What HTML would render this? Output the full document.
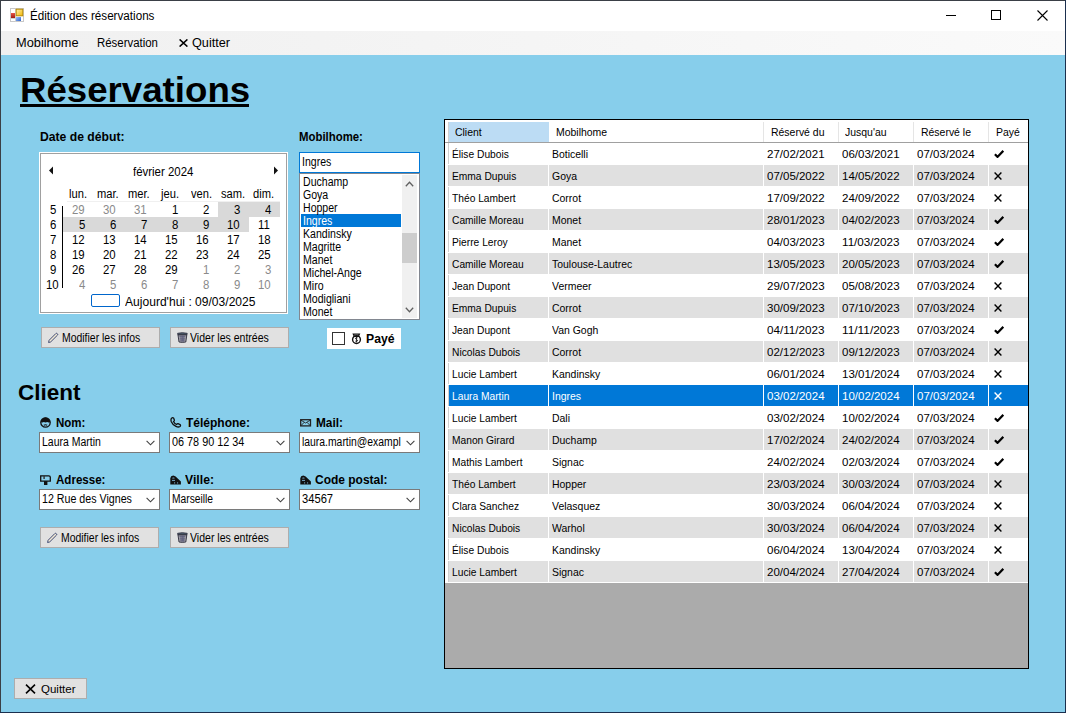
<!DOCTYPE html>
<html><head><meta charset="utf-8"><title>Édition des réservations</title>
<style>
html,body{margin:0;padding:0;}
body{width:1066px;height:713px;position:relative;overflow:hidden;background:#87CEEB;font-family:"Liberation Sans", sans-serif;}
span{position:absolute;white-space:pre;line-height:1;}
</style></head><body>
<div style="position:absolute;left:0px;top:0px;width:1066px;height:31px;background:#fff;z-index:1"></div>
<div style="position:absolute;left:0px;top:31px;width:1066px;height:24px;background:linear-gradient(to right,#F0F0F0,#FAFAFA);z-index:1"></div>
<div style="position:absolute;left:0px;top:0px;width:1066px;height:1px;background:#3A3F46;z-index:50"></div>
<div style="position:absolute;left:0px;top:0px;width:1px;height:713px;background:#3A3F46;z-index:50"></div>
<div style="position:absolute;left:1065px;top:0px;width:1px;height:713px;background:#1B2F4E;z-index:50"></div>
<div style="position:absolute;left:0px;top:712px;width:1066px;height:1px;background:#1B2F4E;z-index:50"></div>
<svg style="position:absolute;left:10px;top:8px;z-index:3" width="14" height="14" viewBox="0 0 14 14">
<defs><linearGradient id="gy" x1="0" y1="0" x2="1" y2="1"><stop offset="0" stop-color="#FFF1B0"/><stop offset="1" stop-color="#F2B600"/></linearGradient>
<linearGradient id="gb" x1="0" y1="0" x2="1" y2="1"><stop offset="0" stop-color="#9CC0FF"/><stop offset="1" stop-color="#2F63C8"/></linearGradient>
<linearGradient id="gr" x1="0" y1="0" x2="0" y2="1"><stop offset="0" stop-color="#E8554A"/><stop offset="1" stop-color="#9E1A10"/></linearGradient></defs>
<rect x="0.5" y="0.5" width="13" height="13" fill="#fff" stroke="#C8C8C8"/>
<line x1="5.5" y1="0" x2="5.5" y2="14" stroke="#D0D0D0"/>
<line x1="0" y1="10.5" x2="5" y2="10.5" stroke="#D0D0D0"/>
<rect x="6.2" y="1.2" width="6.6" height="6.6" fill="url(#gy)" stroke="#B88A00" stroke-width="1"/>
<rect x="1" y="5" width="4" height="5" fill="url(#gr)"/>
<rect x="6" y="9" width="5" height="4" fill="url(#gb)"/>
</svg>
<div style="position:absolute;left:946px;top:15px;width:10px;height:1px;background:#000;z-index:3"></div>
<div style="position:absolute;left:991px;top:10px;width:10px;height:10px;border:1px solid #000;box-sizing:border-box;z-index:3"></div>
<svg style="position:absolute;left:1037px;top:10px;z-index:3" width="11" height="11" viewBox="0 0 11 11">
<path d="M0.5 0.5 L10.5 10.5 M10.5 0.5 L0.5 10.5" stroke="#000" stroke-width="1.1"/></svg>
<svg style="position:absolute;left:179px;top:39px;z-index:3" width="9" height="8" viewBox="0 0 9 8">
<path d="M0.6 0.4 L8.4 7.6 M8.4 0.4 L0.6 7.6" stroke="#000" stroke-width="1.5"/></svg>
<div style="position:absolute;left:20px;top:104px;width:229px;height:3px;background:#000;z-index:3"></div>
<div style="position:absolute;left:39px;top:152px;width:249px;height:162px;background:#fff;z-index:1"></div>
<div style="position:absolute;left:40px;top:153px;width:247px;height:160px;border:1px solid #A0A0A0;box-sizing:border-box;z-index:2"></div>
<svg style="position:absolute;left:48px;top:166px;z-index:3" width="6" height="9" viewBox="0 0 6 9"><path d="M5 0.5 L1 4.5 L5 8.5 Z" fill="#111"/></svg>
<svg style="position:absolute;left:273px;top:166px;z-index:3" width="6" height="9" viewBox="0 0 6 9"><path d="M1 0.5 L5 4.5 L1 8.5 Z" fill="#111"/></svg>
<div style="position:absolute;left:67px;top:201px;width:213px;height:1px;background:#F0F0F0;z-index:2"></div>
<div style="position:absolute;left:62px;top:206px;width:1px;height:82px;background:#000;z-index:2"></div>
<div style="position:absolute;left:218px;top:202px;width:62px;height:15px;background:#D9D9D9;z-index:1"></div>
<div style="position:absolute;left:63px;top:217px;width:186px;height:15px;background:#D9D9D9;z-index:1"></div>
<div style="position:absolute;left:91px;top:294px;width:29px;height:13px;border:1px solid #0066CC;border-radius:2px;box-sizing:border-box;z-index:2"></div>
<div style="position:absolute;left:299px;top:152px;width:121px;height:21px;background:#fff;border:1px solid #0078D7;box-sizing:border-box;z-index:2"></div>
<div style="position:absolute;left:299px;top:173px;width:121px;height:147px;background:#fff;border:1px solid #828790;box-sizing:border-box;z-index:1"></div>
<div style="position:absolute;left:402px;top:175px;width:15px;height:143px;background:#F0F0F0;z-index:2"></div>
<div style="position:absolute;left:402px;top:233px;width:15px;height:30px;background:#CDCDCD;z-index:3"></div>
<svg style="position:absolute;left:404.5px;top:181px;z-index:3" width="9" height="6" viewBox="0 0 9 6"><path d="M0.8 5.2 L4.5 1.3 L8.2 5.2" fill="none" stroke="#606060" stroke-width="1.3"/></svg>
<svg style="position:absolute;left:404.5px;top:307px;z-index:3" width="9" height="6" viewBox="0 0 9 6"><path d="M0.8 0.8 L4.5 4.7 L8.2 0.8" fill="none" stroke="#606060" stroke-width="1.3"/></svg>
<div style="position:absolute;left:301px;top:214px;width:100px;height:13px;background:#0078D7;z-index:2"></div>
<div style="position:absolute;left:41px;top:327px;width:119px;height:21px;background:#E1E1E1;border:1px solid #ADADAD;box-sizing:border-box;z-index:1"></div>
<svg style="position:absolute;left:47px;top:332px;z-index:3" width="12" height="12" viewBox="0 0 12 12">
<path d="M1.6 10.5 L2.1 8.3 L8.9 1.5 Q9.6 1 10.2 1.6 L10.5 1.9 Q11 2.5 10.5 3.1 L3.7 9.9 Z" fill="#F4EBD6" stroke="#34406e" stroke-width="0.95" stroke-linejoin="round"/>
</svg>
<div style="position:absolute;left:170px;top:327px;width:119px;height:21px;background:#E1E1E1;border:1px solid #ADADAD;box-sizing:border-box;z-index:1"></div>
<svg style="position:absolute;left:177px;top:332px;z-index:3" width="11" height="11" viewBox="0 0 11 11">
<path d="M0.6 1.3 Q5.3 0 10.2 1.3 L10 2.8 L0.8 2.8 Z" fill="#4a5a6a" stroke="#2d2d3d" stroke-width="0.8"/>
<path d="M1 2.9 L2 10 Q5.4 10.8 8.8 10 L9.8 2.9 Z" fill="#A8A6AC" stroke="#2a2a3a" stroke-width="0.9"/>
<path d="M2.4 4.4 L8.4 4.4 M2.6 6.2 L8.2 6.2 M2.8 8 L8 8 M3.9 3.4 L4.2 9.8 M5.4 3.4 L5.4 9.8 M6.9 3.4 L6.6 9.8" stroke="#5a5a7a" stroke-width="0.8"/></svg>
<div style="position:absolute;left:327px;top:328px;width:74px;height:21px;background:#fff;z-index:1"></div>
<div style="position:absolute;left:332px;top:332px;width:13px;height:13px;border:1px solid #333;box-sizing:border-box;background:#fff;z-index:2"></div>
<svg style="position:absolute;left:351px;top:333px;z-index:3" width="12" height="12" viewBox="0 0 12 12">
<path d="M2.3 1.1 L8.4 1.1 L7.4 3.4 L3.3 3.4 Z" fill="none" stroke="#111" stroke-width="1.2"/>
<circle cx="5.5" cy="6.6" r="3.9" fill="none" stroke="#111" stroke-width="1.4"/>
<path d="M6.6 4.9 Q5.3 4.2 4.6 5 Q4.1 5.9 5.5 6.5 Q6.9 7.1 6.4 8 Q5.7 8.9 4.3 8.1 M5.5 3.8 L5.5 9.4" fill="none" stroke="#222" stroke-width="0.9"/></svg>
<svg style="position:absolute;left:40px;top:417px;z-index:3" width="12" height="12" viewBox="0 0 12 12">
<circle cx="5.5" cy="5.5" r="4.7" fill="none" stroke="#111" stroke-width="1.3"/>
<path d="M0.8 5.3 A4.7 4.7 0 0 1 10.2 5.3 L8.6 5.6 L7.2 4.9 L5.5 5.5 L3.8 4.9 L2.4 5.6 Z" fill="#111"/>
<path d="M3.8 8.2 Q5.5 7.2 7.2 8.2" fill="none" stroke="#111" stroke-width="1.1"/></svg>
<svg style="position:absolute;left:169.5px;top:417px;z-index:3" width="12" height="11" viewBox="0 0 12 11">
<path d="M1.6 1.2 Q2.6 0.3 3.6 1 L4.4 3.2 Q4.4 4 3.5 4.5 Q4.6 6.8 6.6 7.5 Q7.2 6.6 8 6.7 L10.2 7.6 Q10.9 8.6 10 9.4 Q8.4 10.6 6 9.4 Q2.6 7.8 1.2 4.4 Q0.6 2.4 1.6 1.2 Z" fill="none" stroke="#111" stroke-width="1.3" stroke-linejoin="round"/></svg>
<svg style="position:absolute;left:299.5px;top:418.5px;z-index:3" width="12" height="8" viewBox="0 0 12 8">
<rect x="0.7" y="0.7" width="9.8" height="6.2" fill="none" stroke="#222" stroke-width="1.3"/><path d="M1 1.2 L5.6 4 L10.2 1.2 M1 6.6 L4.2 3.3 M10.2 6.6 L7 3.3" fill="none" stroke="#222" stroke-width="0.9"/></svg>
<div style="position:absolute;left:39px;top:432px;width:121px;height:21px;background:#fff;border:1px solid #7A7A7A;box-sizing:border-box;z-index:1"></div>
<svg style="position:absolute;left:146px;top:440px;z-index:3" width="9" height="6" viewBox="0 0 9 6"><path d="M0.6 0.8 L4.5 4.8 L8.4 0.8" fill="none" stroke="#404040" stroke-width="1.1"/></svg>
<div style="position:absolute;left:169px;top:432px;width:121px;height:21px;background:#fff;border:1px solid #7A7A7A;box-sizing:border-box;z-index:1"></div>
<svg style="position:absolute;left:276px;top:440px;z-index:3" width="9" height="6" viewBox="0 0 9 6"><path d="M0.6 0.8 L4.5 4.8 L8.4 0.8" fill="none" stroke="#404040" stroke-width="1.1"/></svg>
<div style="position:absolute;left:299px;top:432px;width:121px;height:21px;background:#fff;border:1px solid #7A7A7A;box-sizing:border-box;z-index:1"></div>
<svg style="position:absolute;left:406px;top:440px;z-index:3" width="9" height="6" viewBox="0 0 9 6"><path d="M0.6 0.8 L4.5 4.8 L8.4 0.8" fill="none" stroke="#404040" stroke-width="1.1"/></svg>
<svg style="position:absolute;left:40px;top:474.5px;z-index:3" width="12" height="11" viewBox="0 0 12 11">
<path d="M0.7 0.8 L8.8 0.8 Q10.3 0.8 10.3 2.3 L10.3 6.1 L0.7 6.1 Z" fill="none" stroke="#111" stroke-width="1.3"/><rect x="3.4" y="1" width="1.4" height="3" fill="#333"/><rect x="4" y="6.1" width="3.4" height="3.9" fill="#111"/></svg>
<svg style="position:absolute;left:170px;top:475.2px;z-index:3" width="12" height="10" viewBox="0 0 12 10">
<path d="M0.3 9.4 L0.3 3.2 Q0.6 0.6 3.3 0.4 Q4.6 0.6 5.6 1.6 L10.9 6.4 L10.9 9.4 Z" fill="#111"/>
<ellipse cx="3.4" cy="3" rx="1.3" ry="0.55" fill="#7fb6d9"/><rect x="2" y="4.9" width="3" height="0.9" fill="#7fb6d9"/><rect x="4.2" y="7.3" width="0.9" height="1.2" fill="#7fb6d9"/><rect x="7.2" y="7.3" width="0.9" height="1.2" fill="#7fb6d9"/></svg>
<svg style="position:absolute;left:300.3px;top:475.2px;z-index:3" width="12" height="10" viewBox="0 0 12 10">
<path d="M0.3 9.4 L0.3 3.2 Q0.6 0.6 3.3 0.4 Q4.6 0.6 5.6 1.6 L10.9 6.4 L10.9 9.4 Z" fill="#111"/>
<ellipse cx="3.4" cy="3" rx="1.3" ry="0.55" fill="#7fb6d9"/><rect x="2" y="4.9" width="3" height="0.9" fill="#7fb6d9"/><rect x="4.2" y="7.3" width="0.9" height="1.2" fill="#7fb6d9"/><rect x="7.2" y="7.3" width="0.9" height="1.2" fill="#7fb6d9"/></svg>
<div style="position:absolute;left:39px;top:489px;width:121px;height:21px;background:#fff;border:1px solid #7A7A7A;box-sizing:border-box;z-index:1"></div>
<svg style="position:absolute;left:146px;top:497px;z-index:3" width="9" height="6" viewBox="0 0 9 6"><path d="M0.6 0.8 L4.5 4.8 L8.4 0.8" fill="none" stroke="#404040" stroke-width="1.1"/></svg>
<div style="position:absolute;left:169px;top:489px;width:121px;height:21px;background:#fff;border:1px solid #7A7A7A;box-sizing:border-box;z-index:1"></div>
<svg style="position:absolute;left:276px;top:497px;z-index:3" width="9" height="6" viewBox="0 0 9 6"><path d="M0.6 0.8 L4.5 4.8 L8.4 0.8" fill="none" stroke="#404040" stroke-width="1.1"/></svg>
<div style="position:absolute;left:299px;top:489px;width:121px;height:21px;background:#fff;border:1px solid #7A7A7A;box-sizing:border-box;z-index:1"></div>
<svg style="position:absolute;left:406px;top:497px;z-index:3" width="9" height="6" viewBox="0 0 9 6"><path d="M0.6 0.8 L4.5 4.8 L8.4 0.8" fill="none" stroke="#404040" stroke-width="1.1"/></svg>
<div style="position:absolute;left:40px;top:527px;width:119px;height:21px;background:#E1E1E1;border:1px solid #ADADAD;box-sizing:border-box;z-index:1"></div>
<svg style="position:absolute;left:46px;top:532px;z-index:3" width="12" height="12" viewBox="0 0 12 12">
<path d="M1.6 10.5 L2.1 8.3 L8.9 1.5 Q9.6 1 10.2 1.6 L10.5 1.9 Q11 2.5 10.5 3.1 L3.7 9.9 Z" fill="#F4EBD6" stroke="#34406e" stroke-width="0.95" stroke-linejoin="round"/>
</svg>
<div style="position:absolute;left:170px;top:527px;width:119px;height:21px;background:#E1E1E1;border:1px solid #ADADAD;box-sizing:border-box;z-index:1"></div>
<svg style="position:absolute;left:177px;top:532px;z-index:3" width="11" height="11" viewBox="0 0 11 11">
<path d="M0.6 1.3 Q5.3 0 10.2 1.3 L10 2.8 L0.8 2.8 Z" fill="#4a5a6a" stroke="#2d2d3d" stroke-width="0.8"/>
<path d="M1 2.9 L2 10 Q5.4 10.8 8.8 10 L9.8 2.9 Z" fill="#A8A6AC" stroke="#2a2a3a" stroke-width="0.9"/>
<path d="M2.4 4.4 L8.4 4.4 M2.6 6.2 L8.2 6.2 M2.8 8 L8 8 M3.9 3.4 L4.2 9.8 M5.4 3.4 L5.4 9.8 M6.9 3.4 L6.6 9.8" stroke="#5a5a7a" stroke-width="0.8"/></svg>
<div style="position:absolute;left:14px;top:678px;width:73px;height:21px;background:#E1E1E1;border:1px solid #ADADAD;box-sizing:border-box;z-index:1"></div>
<svg style="position:absolute;left:25px;top:684px;z-index:3" width="11" height="10" viewBox="0 0 11 10">
<path d="M1 0.7 L10 9.3 M10 0.7 L1 9.3" stroke="#000" stroke-width="1.6"/></svg>
<div style="position:absolute;left:444px;top:119px;width:585px;height:550px;background:#ABABAB;border:1px solid #000;box-sizing:border-box;z-index:1"></div>
<div style="position:absolute;left:445px;top:120px;width:583px;height:23px;background:#fff;z-index:1"></div>
<div style="position:absolute;left:449px;top:122px;width:100px;height:20px;background:#BCDCF4;z-index:2"></div>
<div style="position:absolute;left:448px;top:122px;width:1px;height:20px;background:#D0D0D0;z-index:2"></div>
<div style="position:absolute;left:445px;top:142px;width:583px;height:1px;background:#A0A0A0;z-index:2"></div>
<div style="position:absolute;left:763px;top:122px;width:1px;height:20px;background:#E5E5E5;z-index:2"></div>
<div style="position:absolute;left:838px;top:122px;width:1px;height:20px;background:#E5E5E5;z-index:2"></div>
<div style="position:absolute;left:913px;top:122px;width:1px;height:20px;background:#E5E5E5;z-index:2"></div>
<div style="position:absolute;left:988px;top:122px;width:1px;height:20px;background:#E5E5E5;z-index:2"></div>
<div style="position:absolute;left:445px;top:143px;width:583px;height:22px;background:#fff;z-index:1"></div>
<div style="position:absolute;left:446px;top:143px;width:2px;height:21px;background:#fff;z-index:2"></div>
<div style="position:absolute;left:448px;top:143px;width:1px;height:21px;background:#D0D0D0;z-index:2"></div>
<div style="position:absolute;left:449px;top:143px;width:99px;height:21px;background:#fff;z-index:2"></div>
<div style="position:absolute;left:549px;top:143px;width:214px;height:21px;background:#fff;z-index:2"></div>
<div style="position:absolute;left:764px;top:143px;width:74px;height:21px;background:#fff;z-index:2"></div>
<div style="position:absolute;left:839px;top:143px;width:74px;height:21px;background:#fff;z-index:2"></div>
<div style="position:absolute;left:914px;top:143px;width:74px;height:21px;background:#fff;z-index:2"></div>
<div style="position:absolute;left:989px;top:143px;width:39px;height:21px;background:#fff;z-index:2"></div>
<svg style="position:absolute;left:994px;top:150px;z-index:5" width="10" height="8" viewBox="0 0 10 8"><path d="M0.9 4.3 L3.5 6.9 L9.3 0.8" fill="none" stroke="#000" stroke-width="2.2"/></svg>
<div style="position:absolute;left:445px;top:165px;width:583px;height:22px;background:#fff;z-index:1"></div>
<div style="position:absolute;left:446px;top:165px;width:2px;height:21px;background:#fff;z-index:2"></div>
<div style="position:absolute;left:448px;top:165px;width:1px;height:21px;background:#D0D0D0;z-index:2"></div>
<div style="position:absolute;left:449px;top:165px;width:99px;height:21px;background:#E0E0E0;z-index:2"></div>
<div style="position:absolute;left:549px;top:165px;width:214px;height:21px;background:#E0E0E0;z-index:2"></div>
<div style="position:absolute;left:764px;top:165px;width:74px;height:21px;background:#E0E0E0;z-index:2"></div>
<div style="position:absolute;left:839px;top:165px;width:74px;height:21px;background:#E0E0E0;z-index:2"></div>
<div style="position:absolute;left:914px;top:165px;width:74px;height:21px;background:#E0E0E0;z-index:2"></div>
<div style="position:absolute;left:989px;top:165px;width:39px;height:21px;background:#E0E0E0;z-index:2"></div>
<svg style="position:absolute;left:994px;top:172px;z-index:5" width="8" height="8" viewBox="0 0 8 8"><path d="M0.6 0.6 L7.4 7.4 M7.4 0.6 L0.6 7.4" stroke="#000" stroke-width="1.4"/></svg>
<div style="position:absolute;left:445px;top:187px;width:583px;height:22px;background:#fff;z-index:1"></div>
<div style="position:absolute;left:446px;top:187px;width:2px;height:21px;background:#fff;z-index:2"></div>
<div style="position:absolute;left:448px;top:187px;width:1px;height:21px;background:#D0D0D0;z-index:2"></div>
<div style="position:absolute;left:449px;top:187px;width:99px;height:21px;background:#fff;z-index:2"></div>
<div style="position:absolute;left:549px;top:187px;width:214px;height:21px;background:#fff;z-index:2"></div>
<div style="position:absolute;left:764px;top:187px;width:74px;height:21px;background:#fff;z-index:2"></div>
<div style="position:absolute;left:839px;top:187px;width:74px;height:21px;background:#fff;z-index:2"></div>
<div style="position:absolute;left:914px;top:187px;width:74px;height:21px;background:#fff;z-index:2"></div>
<div style="position:absolute;left:989px;top:187px;width:39px;height:21px;background:#fff;z-index:2"></div>
<svg style="position:absolute;left:994px;top:194px;z-index:5" width="8" height="8" viewBox="0 0 8 8"><path d="M0.6 0.6 L7.4 7.4 M7.4 0.6 L0.6 7.4" stroke="#000" stroke-width="1.4"/></svg>
<div style="position:absolute;left:445px;top:209px;width:583px;height:22px;background:#fff;z-index:1"></div>
<div style="position:absolute;left:446px;top:209px;width:2px;height:21px;background:#fff;z-index:2"></div>
<div style="position:absolute;left:448px;top:209px;width:1px;height:21px;background:#D0D0D0;z-index:2"></div>
<div style="position:absolute;left:449px;top:209px;width:99px;height:21px;background:#E0E0E0;z-index:2"></div>
<div style="position:absolute;left:549px;top:209px;width:214px;height:21px;background:#E0E0E0;z-index:2"></div>
<div style="position:absolute;left:764px;top:209px;width:74px;height:21px;background:#E0E0E0;z-index:2"></div>
<div style="position:absolute;left:839px;top:209px;width:74px;height:21px;background:#E0E0E0;z-index:2"></div>
<div style="position:absolute;left:914px;top:209px;width:74px;height:21px;background:#E0E0E0;z-index:2"></div>
<div style="position:absolute;left:989px;top:209px;width:39px;height:21px;background:#E0E0E0;z-index:2"></div>
<svg style="position:absolute;left:994px;top:216px;z-index:5" width="10" height="8" viewBox="0 0 10 8"><path d="M0.9 4.3 L3.5 6.9 L9.3 0.8" fill="none" stroke="#000" stroke-width="2.2"/></svg>
<div style="position:absolute;left:445px;top:231px;width:583px;height:22px;background:#fff;z-index:1"></div>
<div style="position:absolute;left:446px;top:231px;width:2px;height:21px;background:#fff;z-index:2"></div>
<div style="position:absolute;left:448px;top:231px;width:1px;height:21px;background:#D0D0D0;z-index:2"></div>
<div style="position:absolute;left:449px;top:231px;width:99px;height:21px;background:#fff;z-index:2"></div>
<div style="position:absolute;left:549px;top:231px;width:214px;height:21px;background:#fff;z-index:2"></div>
<div style="position:absolute;left:764px;top:231px;width:74px;height:21px;background:#fff;z-index:2"></div>
<div style="position:absolute;left:839px;top:231px;width:74px;height:21px;background:#fff;z-index:2"></div>
<div style="position:absolute;left:914px;top:231px;width:74px;height:21px;background:#fff;z-index:2"></div>
<div style="position:absolute;left:989px;top:231px;width:39px;height:21px;background:#fff;z-index:2"></div>
<svg style="position:absolute;left:994px;top:238px;z-index:5" width="10" height="8" viewBox="0 0 10 8"><path d="M0.9 4.3 L3.5 6.9 L9.3 0.8" fill="none" stroke="#000" stroke-width="2.2"/></svg>
<div style="position:absolute;left:445px;top:253px;width:583px;height:22px;background:#fff;z-index:1"></div>
<div style="position:absolute;left:446px;top:253px;width:2px;height:21px;background:#fff;z-index:2"></div>
<div style="position:absolute;left:448px;top:253px;width:1px;height:21px;background:#D0D0D0;z-index:2"></div>
<div style="position:absolute;left:449px;top:253px;width:99px;height:21px;background:#E0E0E0;z-index:2"></div>
<div style="position:absolute;left:549px;top:253px;width:214px;height:21px;background:#E0E0E0;z-index:2"></div>
<div style="position:absolute;left:764px;top:253px;width:74px;height:21px;background:#E0E0E0;z-index:2"></div>
<div style="position:absolute;left:839px;top:253px;width:74px;height:21px;background:#E0E0E0;z-index:2"></div>
<div style="position:absolute;left:914px;top:253px;width:74px;height:21px;background:#E0E0E0;z-index:2"></div>
<div style="position:absolute;left:989px;top:253px;width:39px;height:21px;background:#E0E0E0;z-index:2"></div>
<svg style="position:absolute;left:994px;top:260px;z-index:5" width="10" height="8" viewBox="0 0 10 8"><path d="M0.9 4.3 L3.5 6.9 L9.3 0.8" fill="none" stroke="#000" stroke-width="2.2"/></svg>
<div style="position:absolute;left:445px;top:275px;width:583px;height:22px;background:#fff;z-index:1"></div>
<div style="position:absolute;left:446px;top:275px;width:2px;height:21px;background:#fff;z-index:2"></div>
<div style="position:absolute;left:448px;top:275px;width:1px;height:21px;background:#D0D0D0;z-index:2"></div>
<div style="position:absolute;left:449px;top:275px;width:99px;height:21px;background:#fff;z-index:2"></div>
<div style="position:absolute;left:549px;top:275px;width:214px;height:21px;background:#fff;z-index:2"></div>
<div style="position:absolute;left:764px;top:275px;width:74px;height:21px;background:#fff;z-index:2"></div>
<div style="position:absolute;left:839px;top:275px;width:74px;height:21px;background:#fff;z-index:2"></div>
<div style="position:absolute;left:914px;top:275px;width:74px;height:21px;background:#fff;z-index:2"></div>
<div style="position:absolute;left:989px;top:275px;width:39px;height:21px;background:#fff;z-index:2"></div>
<svg style="position:absolute;left:994px;top:282px;z-index:5" width="8" height="8" viewBox="0 0 8 8"><path d="M0.6 0.6 L7.4 7.4 M7.4 0.6 L0.6 7.4" stroke="#000" stroke-width="1.4"/></svg>
<div style="position:absolute;left:445px;top:297px;width:583px;height:22px;background:#fff;z-index:1"></div>
<div style="position:absolute;left:446px;top:297px;width:2px;height:21px;background:#fff;z-index:2"></div>
<div style="position:absolute;left:448px;top:297px;width:1px;height:21px;background:#D0D0D0;z-index:2"></div>
<div style="position:absolute;left:449px;top:297px;width:99px;height:21px;background:#E0E0E0;z-index:2"></div>
<div style="position:absolute;left:549px;top:297px;width:214px;height:21px;background:#E0E0E0;z-index:2"></div>
<div style="position:absolute;left:764px;top:297px;width:74px;height:21px;background:#E0E0E0;z-index:2"></div>
<div style="position:absolute;left:839px;top:297px;width:74px;height:21px;background:#E0E0E0;z-index:2"></div>
<div style="position:absolute;left:914px;top:297px;width:74px;height:21px;background:#E0E0E0;z-index:2"></div>
<div style="position:absolute;left:989px;top:297px;width:39px;height:21px;background:#E0E0E0;z-index:2"></div>
<svg style="position:absolute;left:994px;top:304px;z-index:5" width="8" height="8" viewBox="0 0 8 8"><path d="M0.6 0.6 L7.4 7.4 M7.4 0.6 L0.6 7.4" stroke="#000" stroke-width="1.4"/></svg>
<div style="position:absolute;left:445px;top:319px;width:583px;height:22px;background:#fff;z-index:1"></div>
<div style="position:absolute;left:446px;top:319px;width:2px;height:21px;background:#fff;z-index:2"></div>
<div style="position:absolute;left:448px;top:319px;width:1px;height:21px;background:#D0D0D0;z-index:2"></div>
<div style="position:absolute;left:449px;top:319px;width:99px;height:21px;background:#fff;z-index:2"></div>
<div style="position:absolute;left:549px;top:319px;width:214px;height:21px;background:#fff;z-index:2"></div>
<div style="position:absolute;left:764px;top:319px;width:74px;height:21px;background:#fff;z-index:2"></div>
<div style="position:absolute;left:839px;top:319px;width:74px;height:21px;background:#fff;z-index:2"></div>
<div style="position:absolute;left:914px;top:319px;width:74px;height:21px;background:#fff;z-index:2"></div>
<div style="position:absolute;left:989px;top:319px;width:39px;height:21px;background:#fff;z-index:2"></div>
<svg style="position:absolute;left:994px;top:326px;z-index:5" width="10" height="8" viewBox="0 0 10 8"><path d="M0.9 4.3 L3.5 6.9 L9.3 0.8" fill="none" stroke="#000" stroke-width="2.2"/></svg>
<div style="position:absolute;left:445px;top:341px;width:583px;height:22px;background:#fff;z-index:1"></div>
<div style="position:absolute;left:446px;top:341px;width:2px;height:21px;background:#fff;z-index:2"></div>
<div style="position:absolute;left:448px;top:341px;width:1px;height:21px;background:#D0D0D0;z-index:2"></div>
<div style="position:absolute;left:449px;top:341px;width:99px;height:21px;background:#E0E0E0;z-index:2"></div>
<div style="position:absolute;left:549px;top:341px;width:214px;height:21px;background:#E0E0E0;z-index:2"></div>
<div style="position:absolute;left:764px;top:341px;width:74px;height:21px;background:#E0E0E0;z-index:2"></div>
<div style="position:absolute;left:839px;top:341px;width:74px;height:21px;background:#E0E0E0;z-index:2"></div>
<div style="position:absolute;left:914px;top:341px;width:74px;height:21px;background:#E0E0E0;z-index:2"></div>
<div style="position:absolute;left:989px;top:341px;width:39px;height:21px;background:#E0E0E0;z-index:2"></div>
<svg style="position:absolute;left:994px;top:348px;z-index:5" width="8" height="8" viewBox="0 0 8 8"><path d="M0.6 0.6 L7.4 7.4 M7.4 0.6 L0.6 7.4" stroke="#000" stroke-width="1.4"/></svg>
<div style="position:absolute;left:445px;top:363px;width:583px;height:22px;background:#fff;z-index:1"></div>
<div style="position:absolute;left:446px;top:363px;width:2px;height:21px;background:#fff;z-index:2"></div>
<div style="position:absolute;left:448px;top:363px;width:1px;height:21px;background:#D0D0D0;z-index:2"></div>
<div style="position:absolute;left:449px;top:363px;width:99px;height:21px;background:#fff;z-index:2"></div>
<div style="position:absolute;left:549px;top:363px;width:214px;height:21px;background:#fff;z-index:2"></div>
<div style="position:absolute;left:764px;top:363px;width:74px;height:21px;background:#fff;z-index:2"></div>
<div style="position:absolute;left:839px;top:363px;width:74px;height:21px;background:#fff;z-index:2"></div>
<div style="position:absolute;left:914px;top:363px;width:74px;height:21px;background:#fff;z-index:2"></div>
<div style="position:absolute;left:989px;top:363px;width:39px;height:21px;background:#fff;z-index:2"></div>
<svg style="position:absolute;left:994px;top:370px;z-index:5" width="8" height="8" viewBox="0 0 8 8"><path d="M0.6 0.6 L7.4 7.4 M7.4 0.6 L0.6 7.4" stroke="#000" stroke-width="1.4"/></svg>
<div style="position:absolute;left:445px;top:385px;width:583px;height:22px;background:#fff;z-index:1"></div>
<div style="position:absolute;left:446px;top:385px;width:2px;height:21px;background:#fff;z-index:2"></div>
<div style="position:absolute;left:448px;top:385px;width:1px;height:21px;background:#D0D0D0;z-index:2"></div>
<div style="position:absolute;left:449px;top:385px;width:99px;height:21px;background:#0078D7;z-index:2"></div>
<div style="position:absolute;left:549px;top:385px;width:214px;height:21px;background:#0078D7;z-index:2"></div>
<div style="position:absolute;left:764px;top:385px;width:74px;height:21px;background:#0078D7;z-index:2"></div>
<div style="position:absolute;left:839px;top:385px;width:74px;height:21px;background:#0078D7;z-index:2"></div>
<div style="position:absolute;left:914px;top:385px;width:74px;height:21px;background:#0078D7;z-index:2"></div>
<div style="position:absolute;left:989px;top:385px;width:39px;height:21px;background:#0078D7;z-index:2"></div>
<svg style="position:absolute;left:994px;top:392px;z-index:5" width="8" height="8" viewBox="0 0 8 8"><path d="M0.6 0.6 L7.4 7.4 M7.4 0.6 L0.6 7.4" stroke="#fff" stroke-width="1.4"/></svg>
<div style="position:absolute;left:445px;top:407px;width:583px;height:22px;background:#fff;z-index:1"></div>
<div style="position:absolute;left:446px;top:407px;width:2px;height:21px;background:#fff;z-index:2"></div>
<div style="position:absolute;left:448px;top:407px;width:1px;height:21px;background:#D0D0D0;z-index:2"></div>
<div style="position:absolute;left:449px;top:407px;width:99px;height:21px;background:#fff;z-index:2"></div>
<div style="position:absolute;left:549px;top:407px;width:214px;height:21px;background:#fff;z-index:2"></div>
<div style="position:absolute;left:764px;top:407px;width:74px;height:21px;background:#fff;z-index:2"></div>
<div style="position:absolute;left:839px;top:407px;width:74px;height:21px;background:#fff;z-index:2"></div>
<div style="position:absolute;left:914px;top:407px;width:74px;height:21px;background:#fff;z-index:2"></div>
<div style="position:absolute;left:989px;top:407px;width:39px;height:21px;background:#fff;z-index:2"></div>
<svg style="position:absolute;left:994px;top:414px;z-index:5" width="10" height="8" viewBox="0 0 10 8"><path d="M0.9 4.3 L3.5 6.9 L9.3 0.8" fill="none" stroke="#000" stroke-width="2.2"/></svg>
<div style="position:absolute;left:445px;top:429px;width:583px;height:22px;background:#fff;z-index:1"></div>
<div style="position:absolute;left:446px;top:429px;width:2px;height:21px;background:#fff;z-index:2"></div>
<div style="position:absolute;left:448px;top:429px;width:1px;height:21px;background:#D0D0D0;z-index:2"></div>
<div style="position:absolute;left:449px;top:429px;width:99px;height:21px;background:#E0E0E0;z-index:2"></div>
<div style="position:absolute;left:549px;top:429px;width:214px;height:21px;background:#E0E0E0;z-index:2"></div>
<div style="position:absolute;left:764px;top:429px;width:74px;height:21px;background:#E0E0E0;z-index:2"></div>
<div style="position:absolute;left:839px;top:429px;width:74px;height:21px;background:#E0E0E0;z-index:2"></div>
<div style="position:absolute;left:914px;top:429px;width:74px;height:21px;background:#E0E0E0;z-index:2"></div>
<div style="position:absolute;left:989px;top:429px;width:39px;height:21px;background:#E0E0E0;z-index:2"></div>
<svg style="position:absolute;left:994px;top:436px;z-index:5" width="10" height="8" viewBox="0 0 10 8"><path d="M0.9 4.3 L3.5 6.9 L9.3 0.8" fill="none" stroke="#000" stroke-width="2.2"/></svg>
<div style="position:absolute;left:445px;top:451px;width:583px;height:22px;background:#fff;z-index:1"></div>
<div style="position:absolute;left:446px;top:451px;width:2px;height:21px;background:#fff;z-index:2"></div>
<div style="position:absolute;left:448px;top:451px;width:1px;height:21px;background:#D0D0D0;z-index:2"></div>
<div style="position:absolute;left:449px;top:451px;width:99px;height:21px;background:#fff;z-index:2"></div>
<div style="position:absolute;left:549px;top:451px;width:214px;height:21px;background:#fff;z-index:2"></div>
<div style="position:absolute;left:764px;top:451px;width:74px;height:21px;background:#fff;z-index:2"></div>
<div style="position:absolute;left:839px;top:451px;width:74px;height:21px;background:#fff;z-index:2"></div>
<div style="position:absolute;left:914px;top:451px;width:74px;height:21px;background:#fff;z-index:2"></div>
<div style="position:absolute;left:989px;top:451px;width:39px;height:21px;background:#fff;z-index:2"></div>
<svg style="position:absolute;left:994px;top:458px;z-index:5" width="10" height="8" viewBox="0 0 10 8"><path d="M0.9 4.3 L3.5 6.9 L9.3 0.8" fill="none" stroke="#000" stroke-width="2.2"/></svg>
<div style="position:absolute;left:445px;top:473px;width:583px;height:22px;background:#fff;z-index:1"></div>
<div style="position:absolute;left:446px;top:473px;width:2px;height:21px;background:#fff;z-index:2"></div>
<div style="position:absolute;left:448px;top:473px;width:1px;height:21px;background:#D0D0D0;z-index:2"></div>
<div style="position:absolute;left:449px;top:473px;width:99px;height:21px;background:#E0E0E0;z-index:2"></div>
<div style="position:absolute;left:549px;top:473px;width:214px;height:21px;background:#E0E0E0;z-index:2"></div>
<div style="position:absolute;left:764px;top:473px;width:74px;height:21px;background:#E0E0E0;z-index:2"></div>
<div style="position:absolute;left:839px;top:473px;width:74px;height:21px;background:#E0E0E0;z-index:2"></div>
<div style="position:absolute;left:914px;top:473px;width:74px;height:21px;background:#E0E0E0;z-index:2"></div>
<div style="position:absolute;left:989px;top:473px;width:39px;height:21px;background:#E0E0E0;z-index:2"></div>
<svg style="position:absolute;left:994px;top:480px;z-index:5" width="8" height="8" viewBox="0 0 8 8"><path d="M0.6 0.6 L7.4 7.4 M7.4 0.6 L0.6 7.4" stroke="#000" stroke-width="1.4"/></svg>
<div style="position:absolute;left:445px;top:495px;width:583px;height:22px;background:#fff;z-index:1"></div>
<div style="position:absolute;left:446px;top:495px;width:2px;height:21px;background:#fff;z-index:2"></div>
<div style="position:absolute;left:448px;top:495px;width:1px;height:21px;background:#D0D0D0;z-index:2"></div>
<div style="position:absolute;left:449px;top:495px;width:99px;height:21px;background:#fff;z-index:2"></div>
<div style="position:absolute;left:549px;top:495px;width:214px;height:21px;background:#fff;z-index:2"></div>
<div style="position:absolute;left:764px;top:495px;width:74px;height:21px;background:#fff;z-index:2"></div>
<div style="position:absolute;left:839px;top:495px;width:74px;height:21px;background:#fff;z-index:2"></div>
<div style="position:absolute;left:914px;top:495px;width:74px;height:21px;background:#fff;z-index:2"></div>
<div style="position:absolute;left:989px;top:495px;width:39px;height:21px;background:#fff;z-index:2"></div>
<svg style="position:absolute;left:994px;top:502px;z-index:5" width="8" height="8" viewBox="0 0 8 8"><path d="M0.6 0.6 L7.4 7.4 M7.4 0.6 L0.6 7.4" stroke="#000" stroke-width="1.4"/></svg>
<div style="position:absolute;left:445px;top:517px;width:583px;height:22px;background:#fff;z-index:1"></div>
<div style="position:absolute;left:446px;top:517px;width:2px;height:21px;background:#fff;z-index:2"></div>
<div style="position:absolute;left:448px;top:517px;width:1px;height:21px;background:#D0D0D0;z-index:2"></div>
<div style="position:absolute;left:449px;top:517px;width:99px;height:21px;background:#E0E0E0;z-index:2"></div>
<div style="position:absolute;left:549px;top:517px;width:214px;height:21px;background:#E0E0E0;z-index:2"></div>
<div style="position:absolute;left:764px;top:517px;width:74px;height:21px;background:#E0E0E0;z-index:2"></div>
<div style="position:absolute;left:839px;top:517px;width:74px;height:21px;background:#E0E0E0;z-index:2"></div>
<div style="position:absolute;left:914px;top:517px;width:74px;height:21px;background:#E0E0E0;z-index:2"></div>
<div style="position:absolute;left:989px;top:517px;width:39px;height:21px;background:#E0E0E0;z-index:2"></div>
<svg style="position:absolute;left:994px;top:524px;z-index:5" width="8" height="8" viewBox="0 0 8 8"><path d="M0.6 0.6 L7.4 7.4 M7.4 0.6 L0.6 7.4" stroke="#000" stroke-width="1.4"/></svg>
<div style="position:absolute;left:445px;top:539px;width:583px;height:22px;background:#fff;z-index:1"></div>
<div style="position:absolute;left:446px;top:539px;width:2px;height:21px;background:#fff;z-index:2"></div>
<div style="position:absolute;left:448px;top:539px;width:1px;height:21px;background:#D0D0D0;z-index:2"></div>
<div style="position:absolute;left:449px;top:539px;width:99px;height:21px;background:#fff;z-index:2"></div>
<div style="position:absolute;left:549px;top:539px;width:214px;height:21px;background:#fff;z-index:2"></div>
<div style="position:absolute;left:764px;top:539px;width:74px;height:21px;background:#fff;z-index:2"></div>
<div style="position:absolute;left:839px;top:539px;width:74px;height:21px;background:#fff;z-index:2"></div>
<div style="position:absolute;left:914px;top:539px;width:74px;height:21px;background:#fff;z-index:2"></div>
<div style="position:absolute;left:989px;top:539px;width:39px;height:21px;background:#fff;z-index:2"></div>
<svg style="position:absolute;left:994px;top:546px;z-index:5" width="8" height="8" viewBox="0 0 8 8"><path d="M0.6 0.6 L7.4 7.4 M7.4 0.6 L0.6 7.4" stroke="#000" stroke-width="1.4"/></svg>
<div style="position:absolute;left:445px;top:561px;width:583px;height:22px;background:#fff;z-index:1"></div>
<div style="position:absolute;left:446px;top:561px;width:2px;height:21px;background:#fff;z-index:2"></div>
<div style="position:absolute;left:448px;top:561px;width:1px;height:21px;background:#D0D0D0;z-index:2"></div>
<div style="position:absolute;left:449px;top:561px;width:99px;height:21px;background:#E0E0E0;z-index:2"></div>
<div style="position:absolute;left:549px;top:561px;width:214px;height:21px;background:#E0E0E0;z-index:2"></div>
<div style="position:absolute;left:764px;top:561px;width:74px;height:21px;background:#E0E0E0;z-index:2"></div>
<div style="position:absolute;left:839px;top:561px;width:74px;height:21px;background:#E0E0E0;z-index:2"></div>
<div style="position:absolute;left:914px;top:561px;width:74px;height:21px;background:#E0E0E0;z-index:2"></div>
<div style="position:absolute;left:989px;top:561px;width:39px;height:21px;background:#E0E0E0;z-index:2"></div>
<svg style="position:absolute;left:994px;top:568px;z-index:5" width="10" height="8" viewBox="0 0 10 8"><path d="M0.9 4.3 L3.5 6.9 L9.3 0.8" fill="none" stroke="#000" stroke-width="2.2"/></svg>
<div style="position:absolute;left:445px;top:582px;width:583px;height:1px;background:#fff;z-index:3"></div>
<span style="left:30.00px;top:10.00px;font-size:12px;color:#000;transform:scaleX(0.9717);transform-origin:0 0;z-index:2">Édition des réservations</span>
<span style="left:16.00px;top:37.00px;font-size:12px;color:#000;transform:scaleX(1.0664);transform-origin:0 0;z-index:2">Mobilhome</span>
<span style="left:97.00px;top:37.00px;font-size:12px;color:#000;transform:scaleX(0.9515);transform-origin:0 0;z-index:2">Réservation</span>
<span style="left:191.50px;top:37.00px;font-size:12px;color:#000;transform:scaleX(1.0575);transform-origin:0 0;z-index:2">Quitter</span>
<span style="left:20.00px;top:72.00px;font-size:35px;font-weight:bold;color:#000;transform:scaleX(1.0469);transform-origin:0 0;z-index:2">Réservations</span>
<span style="left:40.00px;top:131.00px;font-size:12px;font-weight:bold;color:#000;transform:scaleX(1.0141);transform-origin:0 0;z-index:2">Date de début:</span>
<span style="left:132.50px;top:166.00px;font-size:12px;color:#000;transform:scaleX(0.9535);transform-origin:0 0;z-index:2">février 2024</span>
<span style="left:68.98px;top:188.00px;font-size:12px;color:#000;transform:scaleX(0.9300);transform-origin:0 0;z-index:2">lun.</span>
<span style="left:97.19px;top:188.00px;font-size:12px;color:#000;transform:scaleX(0.9300);transform-origin:0 0;z-index:2">mar.</span>
<span style="left:128.19px;top:188.00px;font-size:12px;color:#000;transform:scaleX(0.9300);transform-origin:0 0;z-index:2">mer.</span>
<span style="left:161.37px;top:188.00px;font-size:12px;color:#000;transform:scaleX(0.9300);transform-origin:0 0;z-index:2">jeu.</span>
<span style="left:191.17px;top:188.00px;font-size:12px;color:#000;transform:scaleX(0.9300);transform-origin:0 0;z-index:2">ven.</span>
<span style="left:220.91px;top:188.00px;font-size:12px;color:#000;transform:scaleX(0.9300);transform-origin:0 0;z-index:2">sam.</span>
<span style="left:253.44px;top:188.00px;font-size:12px;color:#000;transform:scaleX(0.9300);transform-origin:0 0;z-index:2">dim.</span>
<span style="left:49.53px;top:204.00px;font-size:12px;color:#000;transform:scaleX(0.9500);transform-origin:0 0;z-index:2">5</span>
<span style="left:72.33px;top:204.00px;font-size:12px;color:#8A8A8A;transform:scaleX(0.9500);transform-origin:0 0;z-index:2">29</span>
<span style="left:103.33px;top:204.00px;font-size:12px;color:#8A8A8A;transform:scaleX(0.9500);transform-origin:0 0;z-index:2">30</span>
<span style="left:134.33px;top:204.00px;font-size:12px;color:#8A8A8A;transform:scaleX(0.9500);transform-origin:0 0;z-index:2">31</span>
<span style="left:171.66px;top:204.00px;font-size:12px;color:#000;transform:scaleX(0.9500);transform-origin:0 0;z-index:2">1</span>
<span style="left:202.66px;top:204.00px;font-size:12px;color:#000;transform:scaleX(0.9500);transform-origin:0 0;z-index:2">2</span>
<span style="left:233.66px;top:204.00px;font-size:12px;color:#000;transform:scaleX(0.9500);transform-origin:0 0;z-index:2">3</span>
<span style="left:264.66px;top:204.00px;font-size:12px;color:#000;transform:scaleX(0.9500);transform-origin:0 0;z-index:2">4</span>
<span style="left:49.53px;top:219.00px;font-size:12px;color:#000;transform:scaleX(0.9500);transform-origin:0 0;z-index:2">6</span>
<span style="left:78.66px;top:219.00px;font-size:12px;color:#000;transform:scaleX(0.9500);transform-origin:0 0;z-index:2">5</span>
<span style="left:109.66px;top:219.00px;font-size:12px;color:#000;transform:scaleX(0.9500);transform-origin:0 0;z-index:2">6</span>
<span style="left:140.66px;top:219.00px;font-size:12px;color:#000;transform:scaleX(0.9500);transform-origin:0 0;z-index:2">7</span>
<span style="left:171.66px;top:219.00px;font-size:12px;color:#000;transform:scaleX(0.9500);transform-origin:0 0;z-index:2">8</span>
<span style="left:202.66px;top:219.00px;font-size:12px;color:#000;transform:scaleX(0.9500);transform-origin:0 0;z-index:2">9</span>
<span style="left:227.33px;top:219.00px;font-size:12px;color:#000;transform:scaleX(0.9500);transform-origin:0 0;z-index:2">10</span>
<span style="left:258.33px;top:219.00px;font-size:12px;color:#000;transform:scaleX(0.9500);transform-origin:0 0;z-index:2">11</span>
<span style="left:49.53px;top:234.00px;font-size:12px;color:#000;transform:scaleX(0.9500);transform-origin:0 0;z-index:2">7</span>
<span style="left:72.33px;top:234.00px;font-size:12px;color:#000;transform:scaleX(0.9500);transform-origin:0 0;z-index:2">12</span>
<span style="left:103.33px;top:234.00px;font-size:12px;color:#000;transform:scaleX(0.9500);transform-origin:0 0;z-index:2">13</span>
<span style="left:134.33px;top:234.00px;font-size:12px;color:#000;transform:scaleX(0.9500);transform-origin:0 0;z-index:2">14</span>
<span style="left:165.33px;top:234.00px;font-size:12px;color:#000;transform:scaleX(0.9500);transform-origin:0 0;z-index:2">15</span>
<span style="left:196.33px;top:234.00px;font-size:12px;color:#000;transform:scaleX(0.9500);transform-origin:0 0;z-index:2">16</span>
<span style="left:227.33px;top:234.00px;font-size:12px;color:#000;transform:scaleX(0.9500);transform-origin:0 0;z-index:2">17</span>
<span style="left:258.33px;top:234.00px;font-size:12px;color:#000;transform:scaleX(0.9500);transform-origin:0 0;z-index:2">18</span>
<span style="left:49.53px;top:249.00px;font-size:12px;color:#000;transform:scaleX(0.9500);transform-origin:0 0;z-index:2">8</span>
<span style="left:72.33px;top:249.00px;font-size:12px;color:#000;transform:scaleX(0.9500);transform-origin:0 0;z-index:2">19</span>
<span style="left:103.33px;top:249.00px;font-size:12px;color:#000;transform:scaleX(0.9500);transform-origin:0 0;z-index:2">20</span>
<span style="left:134.33px;top:249.00px;font-size:12px;color:#000;transform:scaleX(0.9500);transform-origin:0 0;z-index:2">21</span>
<span style="left:165.33px;top:249.00px;font-size:12px;color:#000;transform:scaleX(0.9500);transform-origin:0 0;z-index:2">22</span>
<span style="left:196.33px;top:249.00px;font-size:12px;color:#000;transform:scaleX(0.9500);transform-origin:0 0;z-index:2">23</span>
<span style="left:227.33px;top:249.00px;font-size:12px;color:#000;transform:scaleX(0.9500);transform-origin:0 0;z-index:2">24</span>
<span style="left:258.33px;top:249.00px;font-size:12px;color:#000;transform:scaleX(0.9500);transform-origin:0 0;z-index:2">25</span>
<span style="left:49.53px;top:264.00px;font-size:12px;color:#000;transform:scaleX(0.9500);transform-origin:0 0;z-index:2">9</span>
<span style="left:72.33px;top:264.00px;font-size:12px;color:#000;transform:scaleX(0.9500);transform-origin:0 0;z-index:2">26</span>
<span style="left:103.33px;top:264.00px;font-size:12px;color:#000;transform:scaleX(0.9500);transform-origin:0 0;z-index:2">27</span>
<span style="left:134.33px;top:264.00px;font-size:12px;color:#000;transform:scaleX(0.9500);transform-origin:0 0;z-index:2">28</span>
<span style="left:165.33px;top:264.00px;font-size:12px;color:#000;transform:scaleX(0.9500);transform-origin:0 0;z-index:2">29</span>
<span style="left:202.66px;top:264.00px;font-size:12px;color:#8A8A8A;transform:scaleX(0.9500);transform-origin:0 0;z-index:2">1</span>
<span style="left:233.66px;top:264.00px;font-size:12px;color:#8A8A8A;transform:scaleX(0.9500);transform-origin:0 0;z-index:2">2</span>
<span style="left:264.66px;top:264.00px;font-size:12px;color:#8A8A8A;transform:scaleX(0.9500);transform-origin:0 0;z-index:2">3</span>
<span style="left:46.36px;top:279.00px;font-size:12px;color:#000;transform:scaleX(0.9500);transform-origin:0 0;z-index:2">10</span>
<span style="left:78.66px;top:279.00px;font-size:12px;color:#8A8A8A;transform:scaleX(0.9500);transform-origin:0 0;z-index:2">4</span>
<span style="left:109.66px;top:279.00px;font-size:12px;color:#8A8A8A;transform:scaleX(0.9500);transform-origin:0 0;z-index:2">5</span>
<span style="left:140.66px;top:279.00px;font-size:12px;color:#8A8A8A;transform:scaleX(0.9500);transform-origin:0 0;z-index:2">6</span>
<span style="left:171.66px;top:279.00px;font-size:12px;color:#8A8A8A;transform:scaleX(0.9500);transform-origin:0 0;z-index:2">7</span>
<span style="left:202.66px;top:279.00px;font-size:12px;color:#8A8A8A;transform:scaleX(0.9500);transform-origin:0 0;z-index:2">8</span>
<span style="left:233.66px;top:279.00px;font-size:12px;color:#8A8A8A;transform:scaleX(0.9500);transform-origin:0 0;z-index:2">9</span>
<span style="left:258.33px;top:279.00px;font-size:12px;color:#8A8A8A;transform:scaleX(0.9500);transform-origin:0 0;z-index:2">10</span>
<span style="left:124.50px;top:296.00px;font-size:12px;color:#000;transform:scaleX(1.0060);transform-origin:0 0;z-index:2">Aujourd'hui : 09/03/2025</span>
<span style="left:299.00px;top:131.00px;font-size:12px;font-weight:bold;color:#000;transform:scaleX(0.9494);transform-origin:0 0;z-index:2">Mobilhome:</span>
<span style="left:301.50px;top:156.00px;font-size:12px;color:#000;transform:scaleX(0.8789);transform-origin:0 0;z-index:2">Ingres</span>
<span style="left:302.50px;top:176.00px;font-size:12px;color:#000;transform:scaleX(0.8800);transform-origin:0 0;z-index:4">Duchamp</span>
<span style="left:302.50px;top:189.00px;font-size:12px;color:#000;transform:scaleX(0.8800);transform-origin:0 0;z-index:4">Goya</span>
<span style="left:302.50px;top:202.00px;font-size:12px;color:#000;transform:scaleX(0.8800);transform-origin:0 0;z-index:4">Hopper</span>
<span style="left:302.50px;top:215.00px;font-size:12px;color:#fff;transform:scaleX(0.8800);transform-origin:0 0;z-index:4">Ingres</span>
<span style="left:302.50px;top:228.00px;font-size:12px;color:#000;transform:scaleX(0.8800);transform-origin:0 0;z-index:4">Kandinsky</span>
<span style="left:302.50px;top:241.00px;font-size:12px;color:#000;transform:scaleX(0.8800);transform-origin:0 0;z-index:4">Magritte</span>
<span style="left:302.50px;top:254.00px;font-size:12px;color:#000;transform:scaleX(0.8800);transform-origin:0 0;z-index:4">Manet</span>
<span style="left:302.50px;top:267.00px;font-size:12px;color:#000;transform:scaleX(0.8800);transform-origin:0 0;z-index:4">Michel-Ange</span>
<span style="left:302.50px;top:280.00px;font-size:12px;color:#000;transform:scaleX(0.8800);transform-origin:0 0;z-index:4">Miro</span>
<span style="left:302.50px;top:293.00px;font-size:12px;color:#000;transform:scaleX(0.8800);transform-origin:0 0;z-index:4">Modigliani</span>
<span style="left:302.50px;top:306.00px;font-size:12px;color:#000;transform:scaleX(0.8800);transform-origin:0 0;z-index:4">Monet</span>
<span style="left:61.50px;top:332.00px;font-size:12px;color:#000;transform:scaleX(0.8696);transform-origin:0 0;z-index:2">Modifier les infos</span>
<span style="left:190.00px;top:332.00px;font-size:12px;color:#000;transform:scaleX(0.8773);transform-origin:0 0;z-index:2">Vider les entrées</span>
<span style="left:366.00px;top:333.00px;font-size:12px;font-weight:bold;color:#000;transform:scaleX(1.0177);transform-origin:0 0;z-index:2">Payé</span>
<span style="left:18.00px;top:382.00px;font-size:22px;font-weight:bold;color:#000;transform:scaleX(1.0237);transform-origin:0 0;z-index:2">Client</span>
<span style="left:55.50px;top:417.00px;font-size:12px;font-weight:bold;color:#000;transform:scaleX(0.9598);transform-origin:0 0;z-index:2">Nom:</span>
<span style="left:186.00px;top:417.00px;font-size:12px;font-weight:bold;color:#000;transform:scaleX(0.9998);transform-origin:0 0;z-index:2">Téléphone:</span>
<span style="left:316.00px;top:417.00px;font-size:12px;font-weight:bold;color:#000;transform:scaleX(0.9867);transform-origin:0 0;z-index:2">Mail:</span>
<span style="left:41.50px;top:435.50px;font-size:12px;color:#000;transform:scaleX(0.8729);transform-origin:0 0;z-index:2">Laura Martin</span>
<span style="left:171.50px;top:435.50px;font-size:12px;color:#000;transform:scaleX(0.9036);transform-origin:0 0;z-index:2">06 78 90 12 34</span>
<span style="left:301.50px;top:435.50px;font-size:12px;color:#000;transform:scaleX(0.8649);transform-origin:0 0;z-index:2">laura.martin@exampl</span>
<span style="left:55.50px;top:474.00px;font-size:12px;font-weight:bold;color:#000;transform:scaleX(0.9627);transform-origin:0 0;z-index:2">Adresse:</span>
<span style="left:185.00px;top:474.00px;font-size:12px;font-weight:bold;color:#000;transform:scaleX(1.0197);transform-origin:0 0;z-index:2">Ville:</span>
<span style="left:315.00px;top:474.00px;font-size:12px;font-weight:bold;color:#000;transform:scaleX(0.9976);transform-origin:0 0;z-index:2">Code postal:</span>
<span style="left:41.50px;top:492.50px;font-size:12px;color:#000;transform:scaleX(0.8888);transform-origin:0 0;z-index:2">12 Rue des Vignes</span>
<span style="left:171.50px;top:492.50px;font-size:12px;color:#000;transform:scaleX(0.8535);transform-origin:0 0;z-index:2">Marseille</span>
<span style="left:301.50px;top:492.50px;font-size:12px;color:#000;transform:scaleX(0.9318);transform-origin:0 0;z-index:2">34567</span>
<span style="left:60.50px;top:532.00px;font-size:12px;color:#000;transform:scaleX(0.8696);transform-origin:0 0;z-index:2">Modifier les infos</span>
<span style="left:190.00px;top:532.00px;font-size:12px;color:#000;transform:scaleX(0.8773);transform-origin:0 0;z-index:2">Vider les entrées</span>
<span style="left:40.50px;top:684.00px;font-size:11px;color:#000;transform:scaleX(1.0471);transform-origin:0 0;z-index:2">Quitter</span>
<span style="left:454.70px;top:127.00px;font-size:11px;color:#000;transform:scaleX(0.9500);transform-origin:0 0;z-index:2">Client</span>
<span style="left:555.50px;top:127.00px;font-size:11px;color:#000;transform:scaleX(0.9500);transform-origin:0 0;z-index:2">Mobilhome</span>
<span style="left:770.50px;top:127.00px;font-size:11px;color:#000;transform:scaleX(0.9500);transform-origin:0 0;z-index:2">Réservé du</span>
<span style="left:844.50px;top:127.00px;font-size:11px;color:#000;transform:scaleX(0.9500);transform-origin:0 0;z-index:2">Jusqu'au</span>
<span style="left:920.50px;top:127.00px;font-size:11px;color:#000;transform:scaleX(0.9500);transform-origin:0 0;z-index:2">Réservé le</span>
<span style="left:995.50px;top:127.00px;font-size:11px;color:#000;transform:scaleX(0.9500);transform-origin:0 0;z-index:2">Payé</span>
<span style="left:451.50px;top:149.00px;font-size:11px;color:#000;transform:scaleX(0.9300);transform-origin:0 0;z-index:5">Élise Dubois</span>
<span style="left:551.50px;top:149.00px;font-size:11px;color:#000;transform:scaleX(0.9500);transform-origin:0 0;z-index:5">Boticelli</span>
<span style="left:766.50px;top:149.00px;font-size:11px;color:#000;transform:scaleX(1.0455);transform-origin:0 0;z-index:5">27/02/2021</span>
<span style="left:841.50px;top:149.00px;font-size:11px;color:#000;transform:scaleX(1.0455);transform-origin:0 0;z-index:5">06/03/2021</span>
<span style="left:916.50px;top:149.00px;font-size:11px;color:#000;transform:scaleX(1.0455);transform-origin:0 0;z-index:5">07/03/2024</span>
<span style="left:451.50px;top:171.00px;font-size:11px;color:#000;transform:scaleX(0.9300);transform-origin:0 0;z-index:5">Emma Dupuis</span>
<span style="left:551.50px;top:171.00px;font-size:11px;color:#000;transform:scaleX(0.9500);transform-origin:0 0;z-index:5">Goya</span>
<span style="left:766.50px;top:171.00px;font-size:11px;color:#000;transform:scaleX(1.0455);transform-origin:0 0;z-index:5">07/05/2022</span>
<span style="left:841.50px;top:171.00px;font-size:11px;color:#000;transform:scaleX(1.0455);transform-origin:0 0;z-index:5">14/05/2022</span>
<span style="left:916.50px;top:171.00px;font-size:11px;color:#000;transform:scaleX(1.0455);transform-origin:0 0;z-index:5">07/03/2024</span>
<span style="left:451.50px;top:193.00px;font-size:11px;color:#000;transform:scaleX(0.9300);transform-origin:0 0;z-index:5">Théo Lambert</span>
<span style="left:551.50px;top:193.00px;font-size:11px;color:#000;transform:scaleX(0.9500);transform-origin:0 0;z-index:5">Corrot</span>
<span style="left:766.50px;top:193.00px;font-size:11px;color:#000;transform:scaleX(1.0455);transform-origin:0 0;z-index:5">17/09/2022</span>
<span style="left:841.50px;top:193.00px;font-size:11px;color:#000;transform:scaleX(1.0455);transform-origin:0 0;z-index:5">24/09/2022</span>
<span style="left:916.50px;top:193.00px;font-size:11px;color:#000;transform:scaleX(1.0455);transform-origin:0 0;z-index:5">07/03/2024</span>
<span style="left:451.50px;top:215.00px;font-size:11px;color:#000;transform:scaleX(0.9300);transform-origin:0 0;z-index:5">Camille Moreau</span>
<span style="left:551.50px;top:215.00px;font-size:11px;color:#000;transform:scaleX(0.9500);transform-origin:0 0;z-index:5">Monet</span>
<span style="left:766.50px;top:215.00px;font-size:11px;color:#000;transform:scaleX(1.0455);transform-origin:0 0;z-index:5">28/01/2023</span>
<span style="left:841.50px;top:215.00px;font-size:11px;color:#000;transform:scaleX(1.0455);transform-origin:0 0;z-index:5">04/02/2023</span>
<span style="left:916.50px;top:215.00px;font-size:11px;color:#000;transform:scaleX(1.0455);transform-origin:0 0;z-index:5">07/03/2024</span>
<span style="left:451.50px;top:237.00px;font-size:11px;color:#000;transform:scaleX(0.9300);transform-origin:0 0;z-index:5">Pierre Leroy</span>
<span style="left:551.50px;top:237.00px;font-size:11px;color:#000;transform:scaleX(0.9500);transform-origin:0 0;z-index:5">Manet</span>
<span style="left:766.50px;top:237.00px;font-size:11px;color:#000;transform:scaleX(1.0455);transform-origin:0 0;z-index:5">04/03/2023</span>
<span style="left:841.50px;top:237.00px;font-size:11px;color:#000;transform:scaleX(1.0616);transform-origin:0 0;z-index:5">11/03/2023</span>
<span style="left:916.50px;top:237.00px;font-size:11px;color:#000;transform:scaleX(1.0455);transform-origin:0 0;z-index:5">07/03/2024</span>
<span style="left:451.50px;top:259.00px;font-size:11px;color:#000;transform:scaleX(0.9300);transform-origin:0 0;z-index:5">Camille Moreau</span>
<span style="left:551.50px;top:259.00px;font-size:11px;color:#000;transform:scaleX(0.9500);transform-origin:0 0;z-index:5">Toulouse-Lautrec</span>
<span style="left:766.50px;top:259.00px;font-size:11px;color:#000;transform:scaleX(1.0455);transform-origin:0 0;z-index:5">13/05/2023</span>
<span style="left:841.50px;top:259.00px;font-size:11px;color:#000;transform:scaleX(1.0455);transform-origin:0 0;z-index:5">20/05/2023</span>
<span style="left:916.50px;top:259.00px;font-size:11px;color:#000;transform:scaleX(1.0455);transform-origin:0 0;z-index:5">07/03/2024</span>
<span style="left:451.50px;top:281.00px;font-size:11px;color:#000;transform:scaleX(0.9300);transform-origin:0 0;z-index:5">Jean Dupont</span>
<span style="left:551.50px;top:281.00px;font-size:11px;color:#000;transform:scaleX(0.9500);transform-origin:0 0;z-index:5">Vermeer</span>
<span style="left:766.50px;top:281.00px;font-size:11px;color:#000;transform:scaleX(1.0455);transform-origin:0 0;z-index:5">29/07/2023</span>
<span style="left:841.50px;top:281.00px;font-size:11px;color:#000;transform:scaleX(1.0455);transform-origin:0 0;z-index:5">05/08/2023</span>
<span style="left:916.50px;top:281.00px;font-size:11px;color:#000;transform:scaleX(1.0455);transform-origin:0 0;z-index:5">07/03/2024</span>
<span style="left:451.50px;top:303.00px;font-size:11px;color:#000;transform:scaleX(0.9300);transform-origin:0 0;z-index:5">Emma Dupuis</span>
<span style="left:551.50px;top:303.00px;font-size:11px;color:#000;transform:scaleX(0.9500);transform-origin:0 0;z-index:5">Corrot</span>
<span style="left:766.50px;top:303.00px;font-size:11px;color:#000;transform:scaleX(1.0455);transform-origin:0 0;z-index:5">30/09/2023</span>
<span style="left:841.50px;top:303.00px;font-size:11px;color:#000;transform:scaleX(1.0455);transform-origin:0 0;z-index:5">07/10/2023</span>
<span style="left:916.50px;top:303.00px;font-size:11px;color:#000;transform:scaleX(1.0455);transform-origin:0 0;z-index:5">07/03/2024</span>
<span style="left:451.50px;top:325.00px;font-size:11px;color:#000;transform:scaleX(0.9300);transform-origin:0 0;z-index:5">Jean Dupont</span>
<span style="left:551.50px;top:325.00px;font-size:11px;color:#000;transform:scaleX(0.9500);transform-origin:0 0;z-index:5">Van Gogh</span>
<span style="left:766.50px;top:325.00px;font-size:11px;color:#000;transform:scaleX(1.0616);transform-origin:0 0;z-index:5">04/11/2023</span>
<span style="left:841.50px;top:325.00px;font-size:11px;color:#000;transform:scaleX(1.0785);transform-origin:0 0;z-index:5">11/11/2023</span>
<span style="left:916.50px;top:325.00px;font-size:11px;color:#000;transform:scaleX(1.0455);transform-origin:0 0;z-index:5">07/03/2024</span>
<span style="left:451.50px;top:347.00px;font-size:11px;color:#000;transform:scaleX(0.9300);transform-origin:0 0;z-index:5">Nicolas Dubois</span>
<span style="left:551.50px;top:347.00px;font-size:11px;color:#000;transform:scaleX(0.9500);transform-origin:0 0;z-index:5">Corrot</span>
<span style="left:766.50px;top:347.00px;font-size:11px;color:#000;transform:scaleX(1.0455);transform-origin:0 0;z-index:5">02/12/2023</span>
<span style="left:841.50px;top:347.00px;font-size:11px;color:#000;transform:scaleX(1.0455);transform-origin:0 0;z-index:5">09/12/2023</span>
<span style="left:916.50px;top:347.00px;font-size:11px;color:#000;transform:scaleX(1.0455);transform-origin:0 0;z-index:5">07/03/2024</span>
<span style="left:451.50px;top:369.00px;font-size:11px;color:#000;transform:scaleX(0.9300);transform-origin:0 0;z-index:5">Lucie Lambert</span>
<span style="left:551.50px;top:369.00px;font-size:11px;color:#000;transform:scaleX(0.9500);transform-origin:0 0;z-index:5">Kandinsky</span>
<span style="left:766.50px;top:369.00px;font-size:11px;color:#000;transform:scaleX(1.0455);transform-origin:0 0;z-index:5">06/01/2024</span>
<span style="left:841.50px;top:369.00px;font-size:11px;color:#000;transform:scaleX(1.0455);transform-origin:0 0;z-index:5">13/01/2024</span>
<span style="left:916.50px;top:369.00px;font-size:11px;color:#000;transform:scaleX(1.0455);transform-origin:0 0;z-index:5">07/03/2024</span>
<span style="left:451.50px;top:391.00px;font-size:11px;color:#fff;transform:scaleX(0.9300);transform-origin:0 0;z-index:5">Laura Martin</span>
<span style="left:551.50px;top:391.00px;font-size:11px;color:#fff;transform:scaleX(0.9500);transform-origin:0 0;z-index:5">Ingres</span>
<span style="left:766.50px;top:391.00px;font-size:11px;color:#fff;transform:scaleX(1.0455);transform-origin:0 0;z-index:5">03/02/2024</span>
<span style="left:841.50px;top:391.00px;font-size:11px;color:#fff;transform:scaleX(1.0455);transform-origin:0 0;z-index:5">10/02/2024</span>
<span style="left:916.50px;top:391.00px;font-size:11px;color:#fff;transform:scaleX(1.0455);transform-origin:0 0;z-index:5">07/03/2024</span>
<span style="left:451.50px;top:413.00px;font-size:11px;color:#000;transform:scaleX(0.9300);transform-origin:0 0;z-index:5">Lucie Lambert</span>
<span style="left:551.50px;top:413.00px;font-size:11px;color:#000;transform:scaleX(0.9500);transform-origin:0 0;z-index:5">Dali</span>
<span style="left:766.50px;top:413.00px;font-size:11px;color:#000;transform:scaleX(1.0455);transform-origin:0 0;z-index:5">03/02/2024</span>
<span style="left:841.50px;top:413.00px;font-size:11px;color:#000;transform:scaleX(1.0455);transform-origin:0 0;z-index:5">10/02/2024</span>
<span style="left:916.50px;top:413.00px;font-size:11px;color:#000;transform:scaleX(1.0455);transform-origin:0 0;z-index:5">07/03/2024</span>
<span style="left:451.50px;top:435.00px;font-size:11px;color:#000;transform:scaleX(0.9300);transform-origin:0 0;z-index:5">Manon Girard</span>
<span style="left:551.50px;top:435.00px;font-size:11px;color:#000;transform:scaleX(0.9500);transform-origin:0 0;z-index:5">Duchamp</span>
<span style="left:766.50px;top:435.00px;font-size:11px;color:#000;transform:scaleX(1.0455);transform-origin:0 0;z-index:5">17/02/2024</span>
<span style="left:841.50px;top:435.00px;font-size:11px;color:#000;transform:scaleX(1.0455);transform-origin:0 0;z-index:5">24/02/2024</span>
<span style="left:916.50px;top:435.00px;font-size:11px;color:#000;transform:scaleX(1.0455);transform-origin:0 0;z-index:5">07/03/2024</span>
<span style="left:451.50px;top:457.00px;font-size:11px;color:#000;transform:scaleX(0.9300);transform-origin:0 0;z-index:5">Mathis Lambert</span>
<span style="left:551.50px;top:457.00px;font-size:11px;color:#000;transform:scaleX(0.9500);transform-origin:0 0;z-index:5">Signac</span>
<span style="left:766.50px;top:457.00px;font-size:11px;color:#000;transform:scaleX(1.0455);transform-origin:0 0;z-index:5">24/02/2024</span>
<span style="left:841.50px;top:457.00px;font-size:11px;color:#000;transform:scaleX(1.0455);transform-origin:0 0;z-index:5">02/03/2024</span>
<span style="left:916.50px;top:457.00px;font-size:11px;color:#000;transform:scaleX(1.0455);transform-origin:0 0;z-index:5">07/03/2024</span>
<span style="left:451.50px;top:479.00px;font-size:11px;color:#000;transform:scaleX(0.9300);transform-origin:0 0;z-index:5">Théo Lambert</span>
<span style="left:551.50px;top:479.00px;font-size:11px;color:#000;transform:scaleX(0.9500);transform-origin:0 0;z-index:5">Hopper</span>
<span style="left:766.50px;top:479.00px;font-size:11px;color:#000;transform:scaleX(1.0455);transform-origin:0 0;z-index:5">23/03/2024</span>
<span style="left:841.50px;top:479.00px;font-size:11px;color:#000;transform:scaleX(1.0455);transform-origin:0 0;z-index:5">30/03/2024</span>
<span style="left:916.50px;top:479.00px;font-size:11px;color:#000;transform:scaleX(1.0455);transform-origin:0 0;z-index:5">07/03/2024</span>
<span style="left:451.50px;top:501.00px;font-size:11px;color:#000;transform:scaleX(0.9300);transform-origin:0 0;z-index:5">Clara Sanchez</span>
<span style="left:551.50px;top:501.00px;font-size:11px;color:#000;transform:scaleX(0.9500);transform-origin:0 0;z-index:5">Velasquez</span>
<span style="left:766.50px;top:501.00px;font-size:11px;color:#000;transform:scaleX(1.0455);transform-origin:0 0;z-index:5">30/03/2024</span>
<span style="left:841.50px;top:501.00px;font-size:11px;color:#000;transform:scaleX(1.0455);transform-origin:0 0;z-index:5">06/04/2024</span>
<span style="left:916.50px;top:501.00px;font-size:11px;color:#000;transform:scaleX(1.0455);transform-origin:0 0;z-index:5">07/03/2024</span>
<span style="left:451.50px;top:523.00px;font-size:11px;color:#000;transform:scaleX(0.9300);transform-origin:0 0;z-index:5">Nicolas Dubois</span>
<span style="left:551.50px;top:523.00px;font-size:11px;color:#000;transform:scaleX(0.9500);transform-origin:0 0;z-index:5">Warhol</span>
<span style="left:766.50px;top:523.00px;font-size:11px;color:#000;transform:scaleX(1.0455);transform-origin:0 0;z-index:5">30/03/2024</span>
<span style="left:841.50px;top:523.00px;font-size:11px;color:#000;transform:scaleX(1.0455);transform-origin:0 0;z-index:5">06/04/2024</span>
<span style="left:916.50px;top:523.00px;font-size:11px;color:#000;transform:scaleX(1.0455);transform-origin:0 0;z-index:5">07/03/2024</span>
<span style="left:451.50px;top:545.00px;font-size:11px;color:#000;transform:scaleX(0.9300);transform-origin:0 0;z-index:5">Élise Dubois</span>
<span style="left:551.50px;top:545.00px;font-size:11px;color:#000;transform:scaleX(0.9500);transform-origin:0 0;z-index:5">Kandinsky</span>
<span style="left:766.50px;top:545.00px;font-size:11px;color:#000;transform:scaleX(1.0455);transform-origin:0 0;z-index:5">06/04/2024</span>
<span style="left:841.50px;top:545.00px;font-size:11px;color:#000;transform:scaleX(1.0455);transform-origin:0 0;z-index:5">13/04/2024</span>
<span style="left:916.50px;top:545.00px;font-size:11px;color:#000;transform:scaleX(1.0455);transform-origin:0 0;z-index:5">07/03/2024</span>
<span style="left:451.50px;top:567.00px;font-size:11px;color:#000;transform:scaleX(0.9300);transform-origin:0 0;z-index:5">Lucie Lambert</span>
<span style="left:551.50px;top:567.00px;font-size:11px;color:#000;transform:scaleX(0.9500);transform-origin:0 0;z-index:5">Signac</span>
<span style="left:766.50px;top:567.00px;font-size:11px;color:#000;transform:scaleX(1.0455);transform-origin:0 0;z-index:5">20/04/2024</span>
<span style="left:841.50px;top:567.00px;font-size:11px;color:#000;transform:scaleX(1.0455);transform-origin:0 0;z-index:5">27/04/2024</span>
<span style="left:916.50px;top:567.00px;font-size:11px;color:#000;transform:scaleX(1.0455);transform-origin:0 0;z-index:5">07/03/2024</span>
</body></html>
